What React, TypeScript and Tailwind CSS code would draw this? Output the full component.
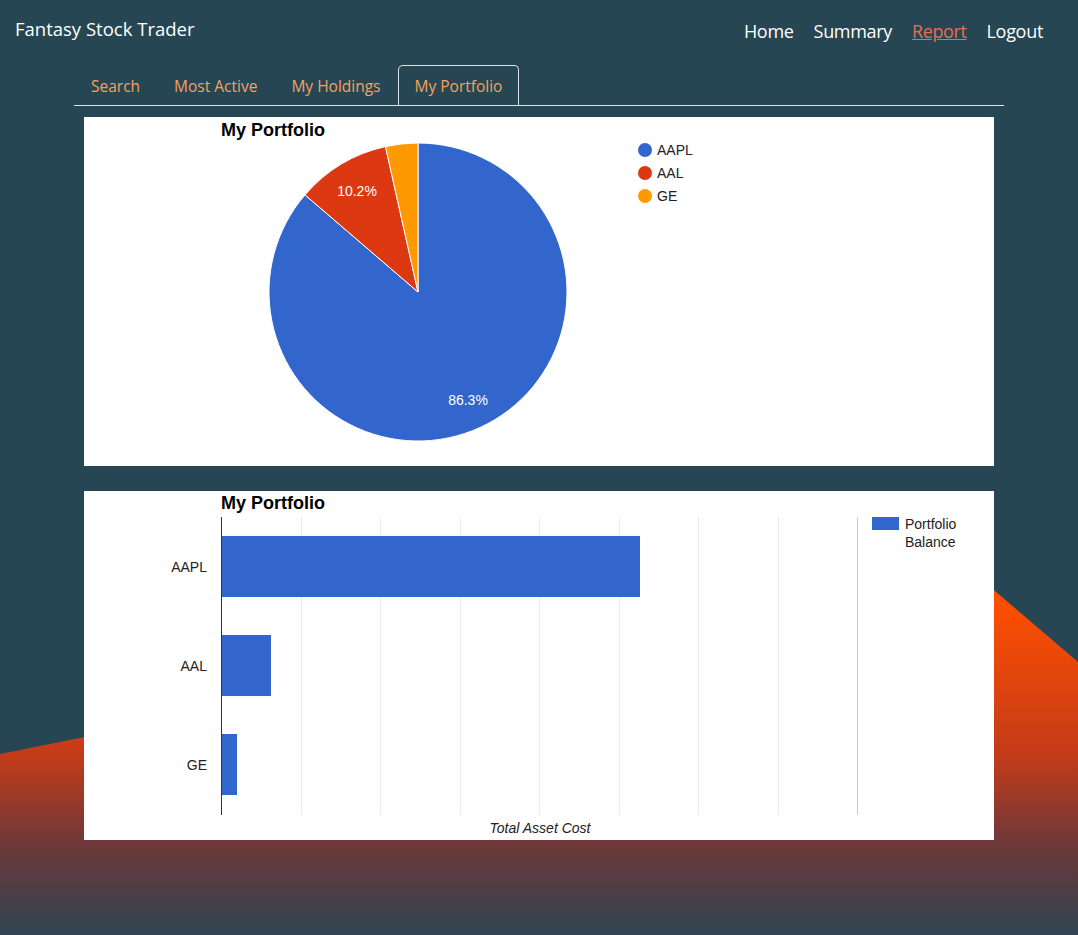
import React from "react"

type Slice = { name: string, pct: number, color: string }

const slices: Slice[] = [
    { name: "AAPL", pct: 86.3, color: "#3366cc" },
    { name: "AAL", pct: 10.2, color: "#dc3912" },
    { name: "GE", pct: 3.5, color: "#ff9900" },
]

const bars = [
    { name: "AAPL", width: 419 },
    { name: "AAL", width: 50 },
    { name: "GE", width: 16 },
]

const navLinks = ["Home", "Summary", "Report", "Logout"]
const tabs = ["Search", "Most Active", "My Holdings", "My Portfolio"]

const slicePath = (cx: number, cy: number, r: number, from: number, to: number) => {
    const a0 = (from / 100) * Math.PI * 2
    const a1 = (to / 100) * Math.PI * 2
    const x0 = cx + r * Math.sin(a0)
    const y0 = cy - r * Math.cos(a0)
    const x1 = cx + r * Math.sin(a1)
    const y1 = cy - r * Math.cos(a1)
    const large = to - from > 50 ? 1 : 0
    return `M ${cx} ${cy} L ${x0} ${y0} A ${r} ${r} 0 ${large} 1 ${x1} ${y1} Z`
}

const PieChart = () => {
    let acc = 0
    return (
        <svg width="910" height="349" className="block" style={{ fontFamily: "'Liberation Sans', Arial, sans-serif" }}>
            <text x="137" y="19" fontSize="18" fontWeight="bold" fill="#000">My Portfolio</text>
            {slices.map((s) => {
                const from = acc
                acc += s.pct
                return <path key={s.name} d={slicePath(334, 175, 149, from, acc)} fill={s.color} stroke="#fff" strokeWidth="1" />
            })}
            <text x="273" y="79" fontSize="14" fill="#fff" textAnchor="middle">10.2%</text>
            <text x="384" y="288" fontSize="14" fill="#fff" textAnchor="middle">86.3%</text>
            {slices.map((s, idx) => (
                <g key={s.name}>
                    <circle cx="561" cy={33 + idx * 23} r="7" fill={s.color} />
                    <text x="573" y={38 + idx * 23} fontSize="14" fill="#222">{s.name}</text>
                </g>
            ))}
        </svg>
    )
}

const BarChart = () => {
    const grid = [1, 2, 3, 4, 5, 6, 7, 8]
    return (
        <svg width="910" height="349" className="block" style={{ fontFamily: "'Liberation Sans', Arial, sans-serif" }}>
            <text x="137" y="18" fontSize="18" fontWeight="bold" fill="#000">My Portfolio</text>
            {grid.map((g) => {
                const x = Math.round(137 + g * 79.5) + 0.5
                return <line key={g} x1={x} x2={x} y1="26" y2="324" stroke={g === 8 ? "#cccccc" : "#ebebeb"} strokeWidth="1" />
            })}
            {bars.map((b, idx) => (
                <g key={b.name}>
                    <rect x="137" y={45 + idx * 99} width={b.width} height="61" fill="#3366cc" />
                    <text x="123" y={81 + idx * 99} fontSize="14" fill="#222" textAnchor="end">{b.name}</text>
                </g>
            ))}
            <line x1="137.5" x2="137.5" y1="26" y2="324" stroke="#333" strokeWidth="1" />
            <text x="456" y="342" fontSize="14" fill="#222" textAnchor="middle" fontStyle="italic">Total Asset Cost</text>
            <rect x="788" y="26" width="27" height="13" fill="#3366cc" />
            <text x="821" y="38" fontSize="14" fill="#222">Portfolio</text>
            <text x="821" y="56" fontSize="14" fill="#222">Balance</text>
        </svg>
    )
}

const App = () => {
    return (
        <div className="relative min-h-[935px] overflow-hidden bg-[#264653] font-['Open_Sans',sans-serif]">
            {/* background mountain */}
            <svg className="absolute inset-0" width="1078" height="935">
                <defs>
                    <linearGradient id="mtn" x1="0" y1="562" x2="0" y2="935" gradientUnits="userSpaceOnUse">
                        <stop offset="0" stopColor="#ff5200" />
                        <stop offset="0.1" stopColor="#ff4f00" />
                        <stop offset="0.52" stopColor="#c33b1a" />
                        <stop offset="0.76" stopColor="#6d383a" />
                        <stop offset="1" stopColor="#2e4451" />
                    </linearGradient>
                </defs>
                <polygon points="0,754 961,562 1078,662 1078,935 0,935" fill="url(#mtn)" />
            </svg>

            <div className="relative">
                <div className="flex justify-between h-[65px]">
                    <div className="pl-[15px] pt-[15px] text-[18.5px] leading-[27px] text-white">Fantasy Stock Trader</div>
                    <div className="flex gap-[20px] pr-[35px] pt-[18px] text-[18px] leading-[27px]">
                        {navLinks.map((link) => (
                            <a
                                key={link}
                                className={link === "Report" ? "text-[#e76f51] underline tracking-[-0.4px]" : "text-white tracking-[-0.3px]"}
                            >
                                {link}
                            </a>
                        ))}
                    </div>
                </div>

                <div className="ml-[74px] w-[930px] flex border-b border-[#dee2e6]">
                    {tabs.map((tab) => (
                        <div
                            key={tab}
                            className={
                                tab === "My Portfolio"
                                    ? "px-4 pt-[8px] pb-[7px] text-[15.5px] leading-[24px] text-[#f4a261] border border-b-0 border-[#dee2e6] rounded-t-[5px]"
                                    : "px-4 pt-[8px] pb-[7px] text-[15.5px] leading-[24px] text-[#f4a261] border border-b-0 border-transparent"
                            }
                        >
                            {tab}
                        </div>
                    ))}
                </div>

                <div className="ml-[84px] w-[910px] mt-[11px] bg-white">
                    <PieChart />
                </div>
                <div className="ml-[84px] w-[910px] mt-[25px] bg-white">
                    <BarChart />
                </div>
            </div>
        </div>
    )
}

export default App
